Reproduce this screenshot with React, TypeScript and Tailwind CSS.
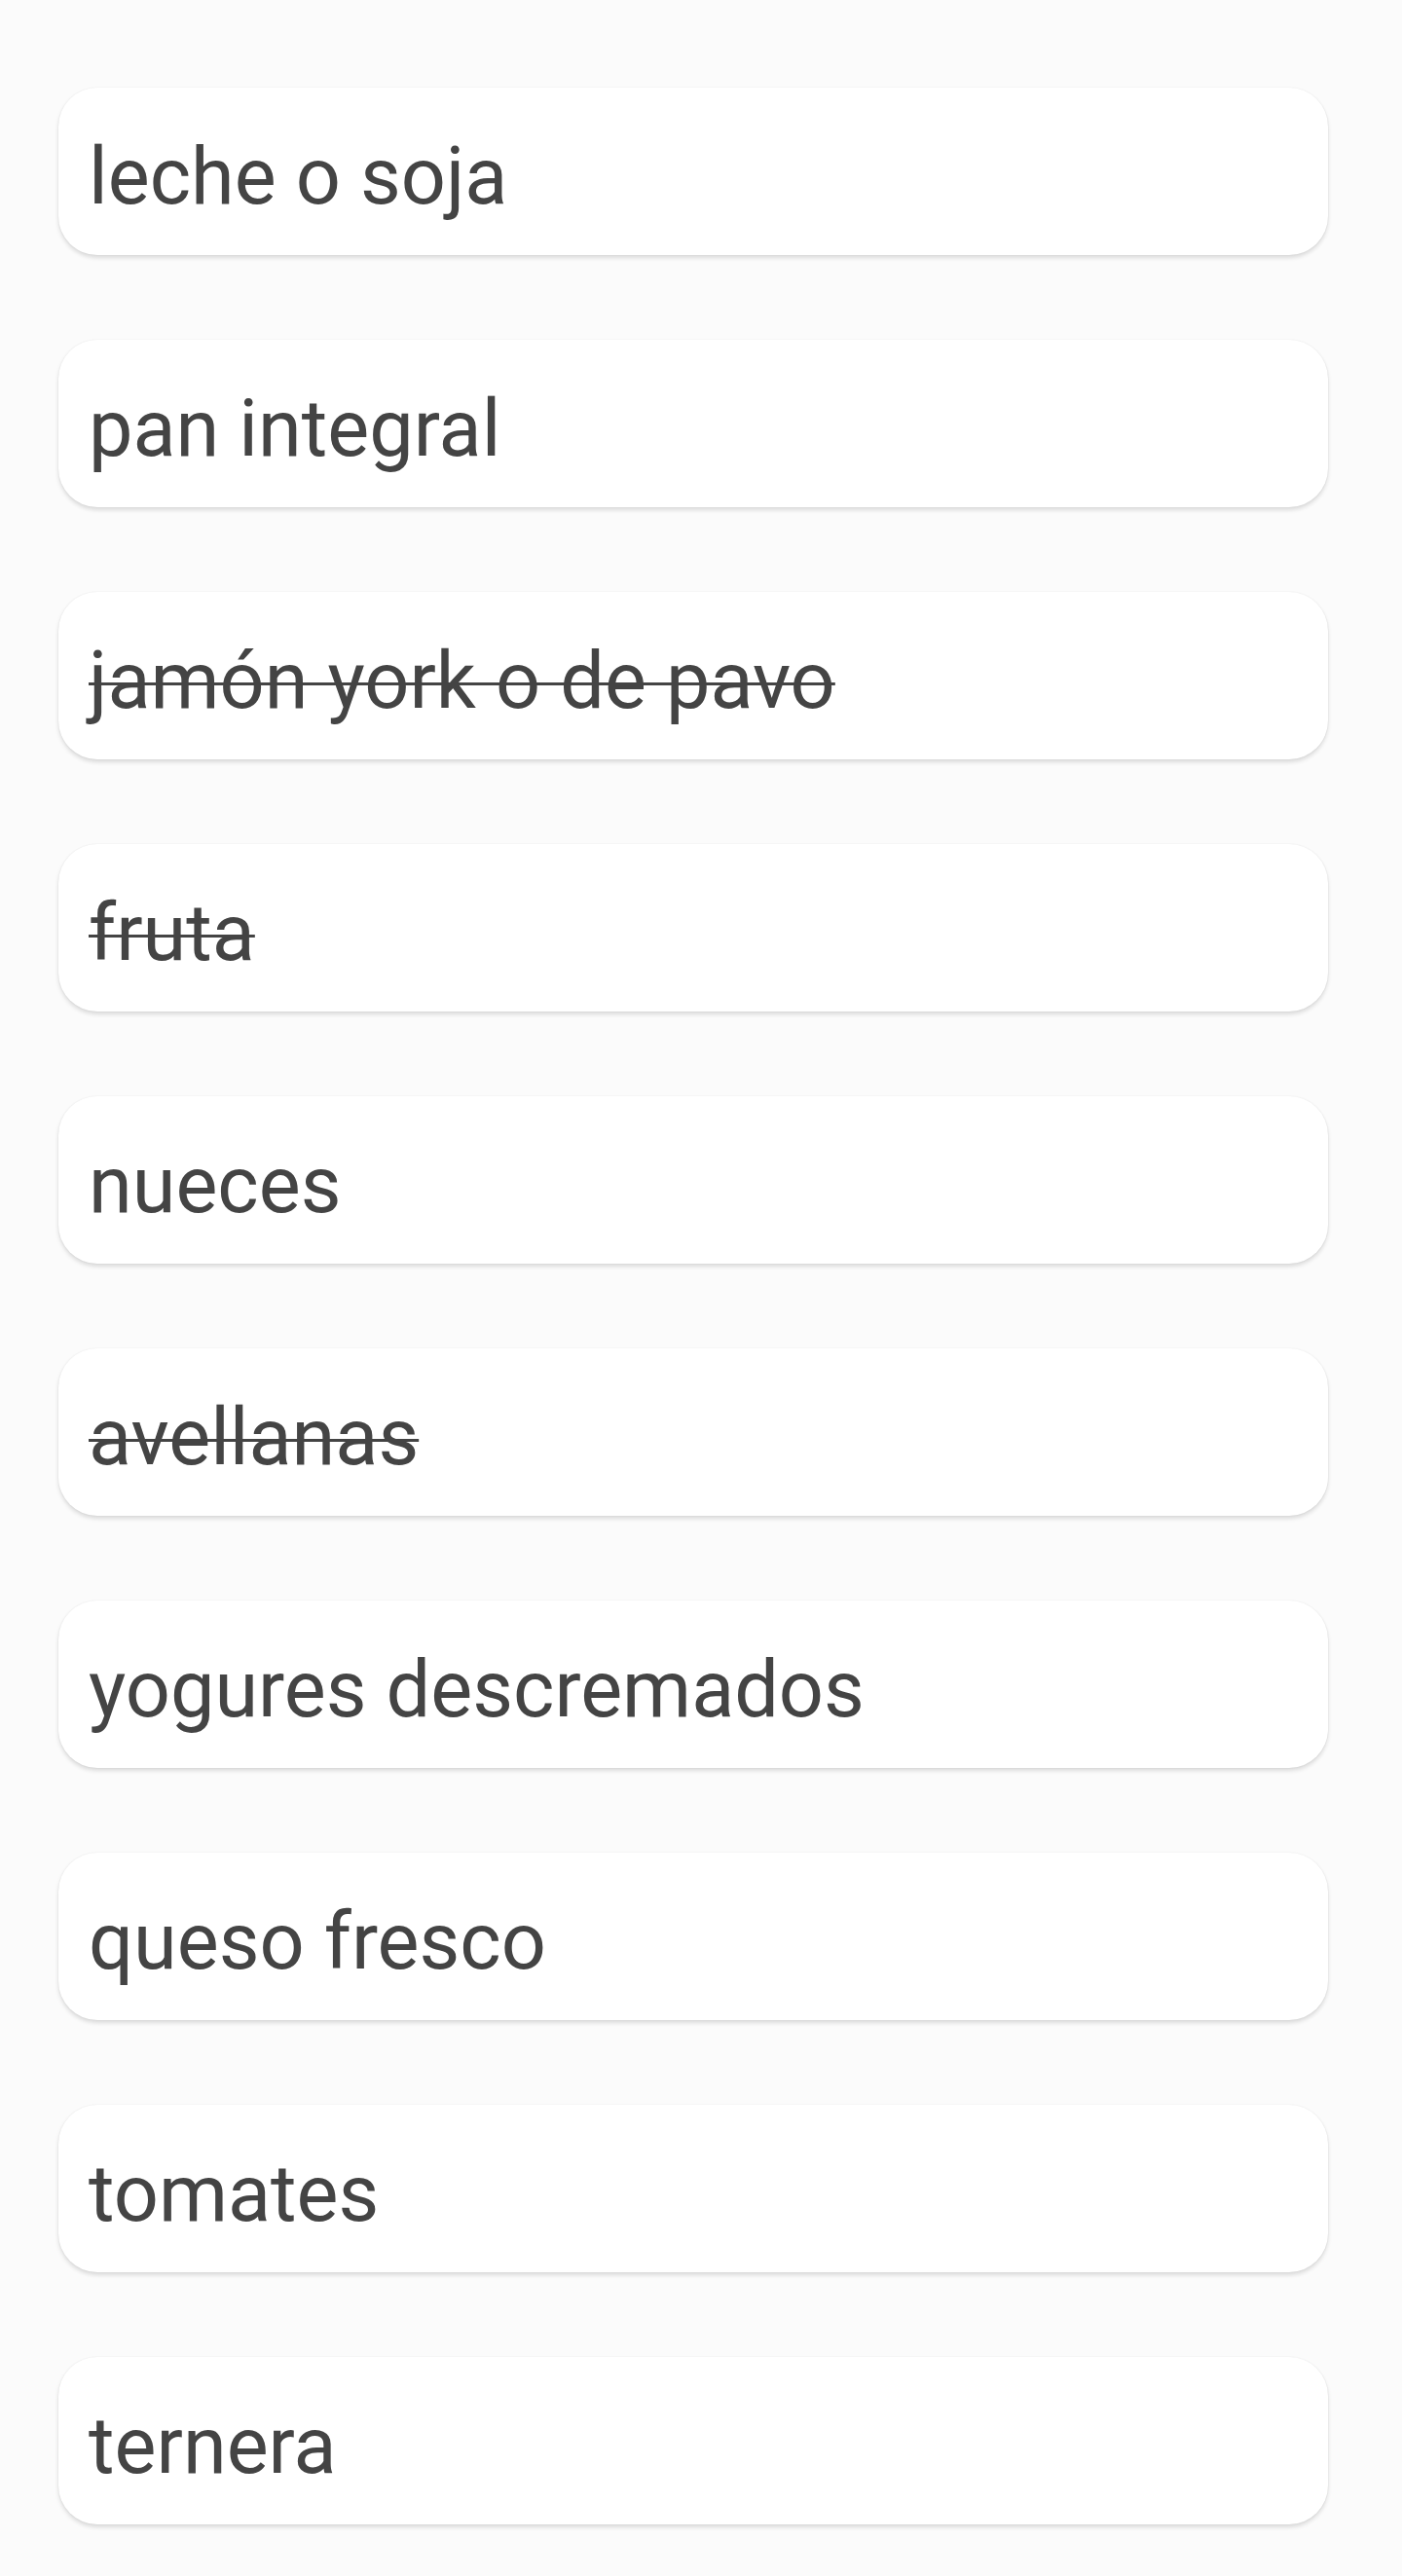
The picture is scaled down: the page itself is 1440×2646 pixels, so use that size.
const items = [
  { text: "leche o soja", done: false },
  { text: "pan integral", done: false },
  { text: "jamón york o de pavo", done: true },
  { text: "fruta", done: true },
  { text: "nueces", done: false },
  { text: "avellanas", done: true },
  { text: "yogures descremados", done: false },
  { text: "queso fresco", done: false },
  { text: "tomates", done: false },
  { text: "ternera", done: false },
];

export default function App() {
  return (
    <div className="min-h-[2646px] bg-[#fbfbfb] pl-[60px] pr-[76px] pt-[90px] pb-[53px] font-['Roboto',sans-serif]">
      <ul className="flex flex-col gap-[87px]">
        {items.map((item) => (
          <li
            key={item.text}
            className="flex h-[172px] items-center rounded-[40px] bg-white pl-[31px] pt-[10px] shadow-[0_3px_4px_rgba(0,0,0,0.13),0_0_2px_rgba(0,0,0,0.07)]"
          >
            <span
              className={
                item.done
                  ? "text-[81px] leading-none text-[#444444] line-through decoration-[3px]"
                  : "text-[81px] leading-none text-[#444444]"
              }
            >
              {item.text}
            </span>
          </li>
        ))}
      </ul>
    </div>
  );
}
